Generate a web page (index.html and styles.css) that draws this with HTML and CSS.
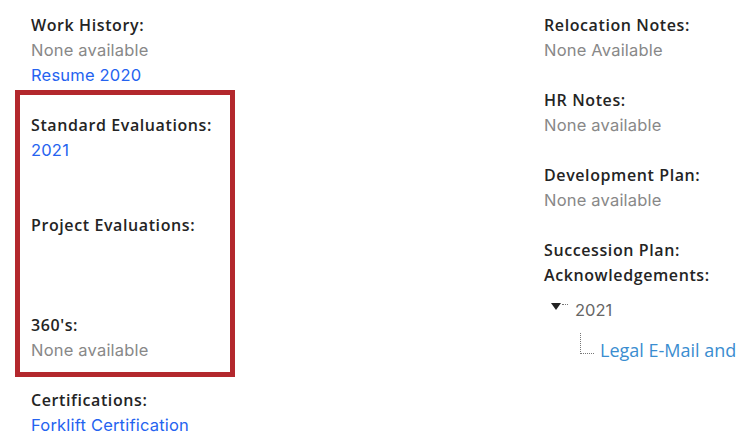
FILE: index.html
```html
<!DOCTYPE html>
<html lang="en">
<head>
<meta charset="utf-8">
<title>Employee Record</title>
<link rel="stylesheet" href="styles.css">
</head>
<body>
<main class="page">
  <section class="col col-left">
    <div class="field field-top">
      <div class="label">Work History:</div>
      <div class="value muted">None available</div>
      <a class="value link" href="#">Resume 2020</a>
    </div>
    <div class="highlight">
      <div class="field">
        <div class="label">Standard Evaluations:</div>
        <a class="value link" href="#">2021</a>
      </div>
      <div class="field">
        <div class="label">Project Evaluations:</div>
        <div class="value empty"></div>
      </div>
      <div class="field field-last">
        <div class="label">360's:</div>
        <div class="value muted">None available</div>
      </div>
    </div>
    <div class="field field-after">
      <div class="label">Certifications:</div>
      <a class="value link" href="#">Forklift Certification</a>
    </div>
  </section>
  <section class="col col-right">
    <div class="rfield">
      <div class="label">Relocation Notes:</div>
      <div class="value muted">None Available</div>
    </div>
    <div class="rfield">
      <div class="label">HR Notes:</div>
      <div class="value muted">None available</div>
    </div>
    <div class="rfield">
      <div class="label">Development Plan:</div>
      <div class="value muted">None available</div>
    </div>
    <div class="rfield rfield-last">
      <div class="label">Succession Plan:</div>
      <div class="label">Acknowledgements:</div>
    </div>
    <div class="tree">
      <div class="tree-node">
        <span class="toggle"><svg width="10" height="7" viewBox="0 0 10 7"><path d="M0 0H10L5 7Z" fill="#222"/></svg></span>
        <span class="dash"></span>
        <span class="node-text">2021</span>
      </div>
      <div class="tree-child">
        <span class="connector"></span>
        <a class="leaf" href="#">Legal E-Mail and</a>
      </div>
    </div>
  </section>
</main>
</body>
</html>
```
FILE: styles.css
```css
html, body {
  margin: 0;
  padding: 0;
  background: #fff;
  overflow: hidden;
}
body {
  width: 739px;
  height: 440px;
}
.page {
  display: grid;
  grid-template-columns: 220px 1fr;
  column-gap: 309px;
  padding: 13px 0 0 15px;
  font-size: 16px;
  line-height: 25px;
}
.col {
  display: flex;
  flex-direction: column;
  min-width: 0;
}
.label {
  font-family: "Open Sans", sans-serif;
  font-weight: 600;
  color: #242424;
  letter-spacing: 0.6px;
  white-space: nowrap;
}
.value {
  font-family: "Inter", sans-serif;
  font-size: 16.5px;
  letter-spacing: 0.2px;
  display: block;
  text-decoration: none;
  white-space: nowrap;
}
.muted { color: #888; }
.link { color: #2563f0; }
.empty { height: 25px; }
.field { padding-left: 16px; }
.field-top { margin-bottom: 2px; }
.highlight {
  border: 5px solid #b3282d;
  padding: 18px 0 9px 11px;
  display: flex;
  flex-direction: column;
  gap: 50px;
}
.highlight .field { padding-left: 0; }
.field-after { margin-top: 11px; }
.rfield { margin-bottom: 25px; }
.rfield-last { margin-bottom: 10px; }
.tree {
  display: flex;
  flex-direction: column;
  white-space: nowrap;
}
.tree-node {
  display: flex;
  align-items: center;
  height: 25px;
  padding-left: 7px;
}
.toggle {
  display: flex;
  width: 10px;
  height: 7px;
  margin-top: -8px;
}
.dash {
  width: 6px;
  border-top: 1px dotted #777;
  margin: -12px 7px 0 1px;
}
.node-text {
  font-family: "Inter", sans-serif;
  font-size: 16.5px;
  color: #666;
}
.tree-child {
  display: flex;
  align-items: flex-end;
  padding-left: 36px;
  margin-top: 10px;
}
.connector {
  width: 13px;
  height: 20px;
  border-left: 1px dotted #777;
  border-bottom: 1px dotted #777;
  margin: 0 6px 9px 0;
  flex: none;
}
.leaf {
  font-family: "Open Sans", sans-serif;
  font-size: 18px;
  line-height: 25px;
  color: #3a8dd0;
  text-decoration: none;
}
```
